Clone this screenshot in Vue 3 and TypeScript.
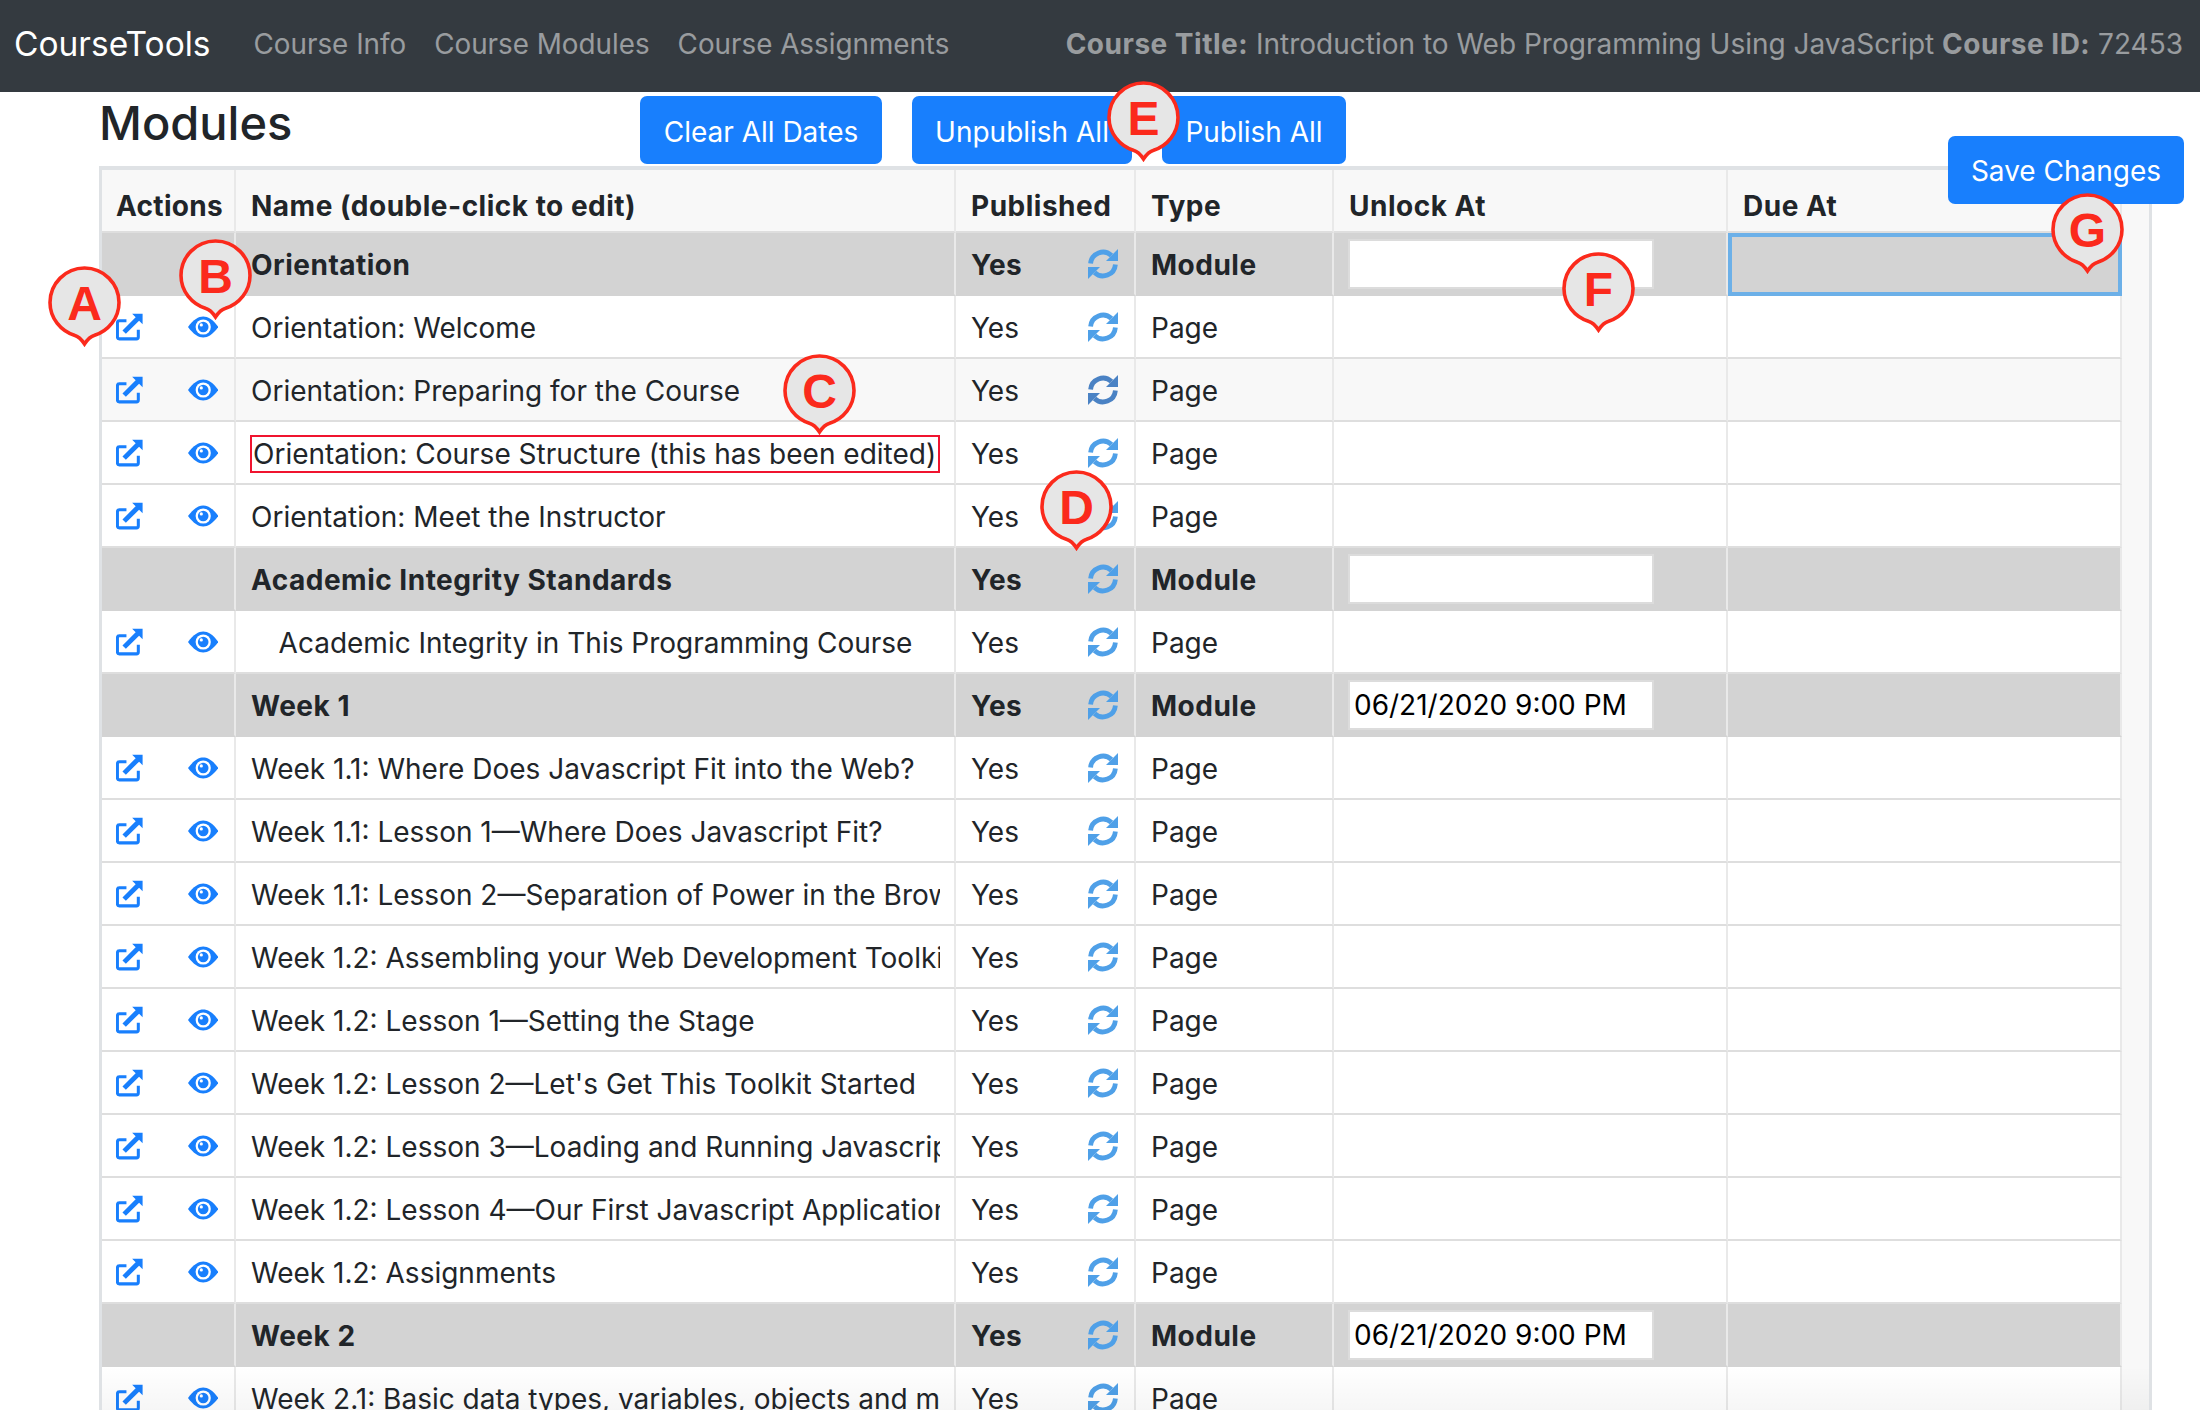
<script setup lang="ts">
type Row = {
  name: string;
  kind: "Module" | "Page";
  unlock?: string;
  centered?: boolean;
  edited?: boolean;
  hover?: boolean;
};

const rows: Row[] = [
  { name: "Orientation", kind: "Module", unlock: "" },
  { name: "Orientation: Welcome", kind: "Page" },
  { name: "Orientation: Preparing for the Course", kind: "Page", hover: true },
  { name: "Orientation: Course Structure (this has been edited)", kind: "Page", edited: true },
  { name: "Orientation: Meet the Instructor", kind: "Page" },
  { name: "Academic Integrity Standards", kind: "Module", unlock: "" },
  { name: "Academic Integrity in This Programming Course", kind: "Page", centered: true },
  { name: "Week 1", kind: "Module", unlock: "06/21/2020 9:00 PM" },
  { name: "Week 1.1: Where Does Javascript Fit into the Web?", kind: "Page" },
  { name: "Week 1.1: Lesson 1—Where Does Javascript Fit?", kind: "Page" },
  { name: "Week 1.1: Lesson 2—Separation of Power in the Browser", kind: "Page" },
  { name: "Week 1.2: Assembling your Web Development Toolkit", kind: "Page" },
  { name: "Week 1.2: Lesson 1—Setting the Stage", kind: "Page" },
  { name: "Week 1.2: Lesson 2—Let's Get This Toolkit Started", kind: "Page" },
  { name: "Week 1.2: Lesson 3—Loading and Running Javascript", kind: "Page" },
  { name: "Week 1.2: Lesson 4—Our First Javascript Application", kind: "Page" },
  { name: "Week 1.2: Assignments", kind: "Page" },
  { name: "Week 2", kind: "Module", unlock: "06/21/2020 9:00 PM" },
  { name: "Week 2.1: Basic data types, variables, objects and methods", kind: "Page" },
];

const pins = [
  { label: "A", x: 48, y: 266 },
  { label: "B", x: 179, y: 239 },
  { label: "C", x: 783, y: 354 },
  { label: "D", x: 1040, y: 470 },
  { label: "E", x: 1107, y: 81 },
  { label: "F", x: 1562, y: 252 },
  { label: "G", x: 2051, y: 193 },
];
</script>

<template>
  <div class="page">
    <nav class="nav">
      <span class="brand">CourseTools</span>
      <a class="link">Course Info</a>
      <a class="link">Course Modules</a>
      <a class="link">Course Assignments</a>
      <span class="course">
        <b>Course Title:</b> Introduction to Web Programming Using JavaScript <b>Course ID:</b> 72453
      </span>
    </nav>

    <header class="head">
      <h1>Modules</h1>
      <button class="btn clear">Clear All Dates</button>
      <button class="btn unpublish">Unpublish All</button>
      <button class="btn publish">Publish All</button>
    </header>

    <div class="panel">
      <table>
        <colgroup>
          <col style="width: 134px" />
          <col style="width: 720px" />
          <col style="width: 180px" />
          <col style="width: 198px" />
          <col style="width: 394px" />
          <col style="width: 394px" />
        </colgroup>
        <thead>
          <tr>
            <th class="first">Actions</th>
            <th>Name (double-click to edit)</th>
            <th>Published</th>
            <th>Type</th>
            <th>Unlock At</th>
            <th>Due At</th>
          </tr>
        </thead>
        <tbody>
          <tr
            v-for="(row, i) in rows"
            :key="row.name"
            :class="{ module: row.kind === 'Module', hover: row.hover }"
          >
            <td>
              <div v-if="row.kind === 'Page'" class="actions">
                <svg class="ext" width="28" height="28" viewBox="0 0 28 28">
                  <path d="M11 7.5H3.5a2 2 0 0 0-2 2v15a2 2 0 0 0 2 2h18a2 2 0 0 0 2-2V17" fill="none" stroke="#187ffd" stroke-width="3.2" />
                  <path d="M17 0H28V11L24.3 7.3 10.4 21.2 6.8 17.6 20.7 3.7Z" fill="#187ffd" />
                </svg>
                <svg class="eye" width="32" height="22" viewBox="0 0 32 22">
                  <path d="M0 11C6 3 11 0 16 0s10 3 16 11c-6 8-11 11-16 11S6 19 0 11Z" fill="#187ffd" />
                  <circle cx="16" cy="11" r="8" fill="#fff" />
                  <circle cx="16" cy="11" r="5.6" fill="#187ffd" />
                  <circle cx="14" cy="8.8" r="1.7" fill="#fff" />
                </svg>
              </div>
            </td>
            <td>
              <div class="name" :class="{ centered: row.centered, edited: row.edited }">{{ row.name }}</div>
            </td>
            <td>
              <div class="published">
                <span>Yes</span>
                <svg width="30" height="30" viewBox="0 0 30 30">
                  <g>
                    <path d="M2.6 14.5A12.4 12.4 0 0 1 23.5 6.5" fill="none" stroke="currentColor" stroke-width="4.8" />
                    <path d="M30 0V12H18Z" fill="currentColor" />
                  </g>
                  <g transform="rotate(180 15 15)">
                    <path d="M2.6 14.5A12.4 12.4 0 0 1 23.5 6.5" fill="none" stroke="currentColor" stroke-width="4.8" />
                    <path d="M30 0V12H18Z" fill="currentColor" />
                  </g>
                </svg>
              </div>
            </td>
            <td>{{ row.kind }}</td>
            <td>
              <input v-if="row.unlock !== undefined" class="date" type="text" :value="row.unlock" />
            </td>
            <td :class="{ selected: i === 0 }"></td>
          </tr>
        </tbody>
      </table>
    </div>

    <button class="btn save">Save Changes</button>

    <div
      v-for="pin in pins"
      :key="pin.label"
      class="pin"
      :style="{ left: pin.x + 'px', top: pin.y + 'px' }"
    >
      <svg width="73" height="81" viewBox="0 0 73 81">
        <path
          d="M36.5 2C55.5 2 71 17.5 71 36.5C71 52 60.5 65 46 69.5C42.5 70.5 39.5 73.5 36.5 78C33.5 73.5 30.5 70.5 27 69.5C12.5 65 2 52 2 36.5C2 17.5 17.5 2 36.5 2Z"
          fill="#e6e6e6"
          stroke="#fb2a1c"
          stroke-width="3.6"
        />
      </svg>
      <span>{{ pin.label }}</span>
    </div>
  </div>
</template>

<style>
html,
body {
  margin: 0;
  background: #fff;
}
</style>

<style scoped>
.page {
  position: relative;
  width: 2200px;
  height: 1410px;
  overflow: hidden;
  background: #fff;
  color: #212529;
  font-family: Inter, "Noto Sans", "Liberation Sans", sans-serif;
  font-size: 28px;
}
.nav {
  display: flex;
  align-items: center;
  box-sizing: border-box;
  height: 92px;
  padding: 0 17px 5px 14px;
  background: #343a40;
  color: rgba(255, 255, 255, 0.5);
}
.brand {
  margin-right: 43px;
  color: #fff;
  font-size: 33.5px;
}
.link {
  margin-right: 28px;
  font-size: 27.8px;
}
.course {
  margin-left: auto;
}
.course b {
  font-weight: 700;
  letter-spacing: 0.5px;
}
.head {
  display: flex;
  align-items: flex-start;
  box-sizing: border-box;
  height: 74px;
  padding: 4px 0 0 99px;
}
h1 {
  width: 541px;
  margin: 0;
  font-size: 47px;
  font-weight: 500;
  line-height: 54px;
}
.btn {
  box-sizing: border-box;
  height: 68px;
  padding: 4px 0 0;
  border: 0;
  border-radius: 7px;
  background: #187ffd;
  color: #fff;
  font: inherit;
  white-space: nowrap;
}
.clear {
  width: 242px;
  margin-right: 30px;
}
.unpublish {
  width: 220px;
  margin-right: 30px;
}
.publish {
  width: 184px;
}
.save {
  position: absolute;
  left: 1948px;
  top: 136px;
  width: 236px;
  padding-top: 1px;
}
.panel {
  position: relative;
  box-sizing: border-box;
  width: 2053px;
  margin-left: 99px;
  height: 1244px;
  overflow: hidden;
  border: solid #dfe2e5;
  border-width: 4px 3px 0;
  background: #f8f8f8;
}
.panel::after {
  content: "";
  position: absolute;
  left: 0;
  right: 0;
  bottom: 0;
  height: 44px;
  background: linear-gradient(rgba(0, 0, 0, 0), rgba(0, 0, 0, 0.035));
}
table {
  table-layout: fixed;
  width: 2020px;
  border-collapse: separate;
  border-spacing: 0;
}
th,
td {
  box-sizing: border-box;
  height: 63px;
  padding: 3px 16px 0 15px;
  border-right: 2px solid #e9e9e9;
  border-bottom: 2px solid #dedede;
  text-align: left;
  vertical-align: middle;
}
th {
  padding-top: 10px;
  font-weight: 700;
  letter-spacing: 0.5px;
  background: #f8f8f8;
}
th.first {
  padding-left: 14px;
  padding-right: 0;
  letter-spacing: 0.3px;
}
td {
  background: #fff;
}
tr.hover td {
  background: #f8f8f8;
}
tr.module td {
  background: #d3d3d3;
  font-weight: 700;
  letter-spacing: 0.5px;
  border-bottom-color: #d3d3d3;
}
.actions {
  display: flex;
  align-items: center;
  gap: 45px;
  margin: -3px 0 0 -1px;
}
.name {
  overflow: hidden;
  white-space: nowrap;
  margin-right: -2px;
}
.centered {
  text-align: center;
}
.edited {
  box-sizing: border-box;
  height: 38px;
  line-height: 34px;
  padding: 0 1px;
  border: 2px solid #f0142f;
  margin-left: -1px;
  letter-spacing: 0;
}
.published {
  display: flex;
  align-items: center;
  justify-content: space-between;
}
.published svg {
  flex: none;
  margin-top: -3px;
  color: #4fa0e8;
}
tr.hover .published svg {
  color: #4a82c4;
}
.date {
  box-sizing: border-box;
  display: block;
  width: 302px;
  height: 46px;
  margin: -3px 0 0 1px;
  padding: 0 4px;
  border: 0;
  outline: 2px solid #dcdcdc;
  background: #fff;
  color: #000;
  font: inherit;
  font-weight: 400;
  letter-spacing: 0;
}
tr td.selected {
  padding: 0;
  border: 4px solid #6cb0e8;
}
.pin {
  position: absolute;
  width: 73px;
  height: 81px;
}
.pin svg {
  display: block;
}
.pin span {
  position: absolute;
  left: 0;
  top: 10px;
  width: 73px;
  text-align: center;
  color: #fb2a1c;
  font-family: "Liberation Sans", Arial, sans-serif;
  font-size: 48px;
  font-weight: 700;
  line-height: 56px;
}
</style>
